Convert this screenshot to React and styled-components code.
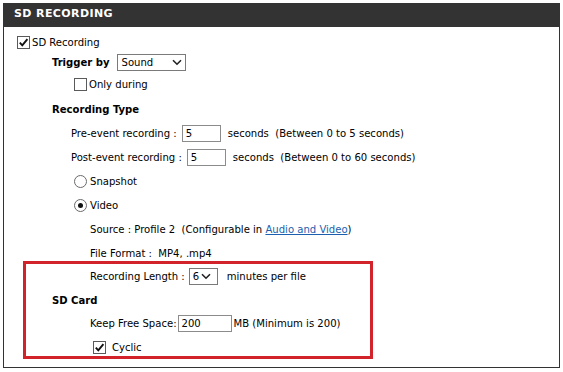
import React from "react";
import styled, { createGlobalStyle } from "styled-components";

const GlobalStyle = createGlobalStyle`
  html, body { margin: 0; padding: 0; background: #fff; }
  body {
    font-family: "DejaVu Sans Condensed", "DejaVu Sans", sans-serif;
    font-size: 11.2px;
    color: #000;
  }
`;

const Panel = styled.section`
  margin: 3px 0 0 3px;
  width: 557px;
`;

const Header = styled.h2`
  margin: 0;
  height: 24px;
  box-sizing: border-box;
  padding: 4px 0 0 11px;
  line-height: 20px;
  background: #333;
  color: #fff;
  font: bold 11px "DejaVu Sans", sans-serif;
  letter-spacing: 0.4px;
`;

const Body = styled.div`
  border: 1px solid #333;
  border-top: none;
  padding: 5px 0 8px;
`;

const Row = styled.div`
  display: flex;
  align-items: center;
  height: ${(p) => p.$h || 24}px;
  padding-left: ${(p) => p.$indent || 0}px;
  white-space: pre;
`;

const Bold = styled.span`
  font-weight: bold;
`;

const Text = styled.span`
  margin-left: ${(p) => p.$ml || 0}px;
`;

const Box = styled.span`
  display: inline-flex;
  align-items: center;
  justify-content: center;
  width: 13px;
  height: 13px;
  box-sizing: border-box;
  border: 1px solid #5a5a5a;
  background: #fff;
  flex: none;
`;

const Round = styled(Box)`
  border-radius: 50%;
  border-color: #6a6a6a;
`;

const Dot = styled.span`
  width: 5px;
  height: 5px;
  border-radius: 50%;
  background: #111;
`;

const Field = styled.span`
  display: inline-flex;
  align-items: center;
  box-sizing: border-box;
  height: 17px;
  width: ${(p) => p.$w}px;
  margin-left: ${(p) => p.$ml || 0}px;
  margin-right: ${(p) => p.$mr || 0}px;
  padding-left: 3px;
  border: 1px solid #8c8c8c;
  background: #fff;
`;

const Select = styled(Field)`
  padding-left: ${(p) => p.$pl || 4}px;
  padding-right: ${(p) => p.$pr || 3}px;
  border-color: #7a7a7a;
`;

const Chevron = styled.svg`
  margin-left: auto;
  width: 10px;
  height: 7px;
  flex: none;
`;

const Link = styled.a`
  color: #1b5fae;
  text-decoration: underline;
`;

const Highlight = styled.div`
  position: relative;
  &::after {
    content: "";
    position: absolute;
    left: 19px;
    top: -4px;
    width: 350px;
    height: 98px;
    box-sizing: border-box;
    border: 3px solid #d2232a;
    pointer-events: none;
  }
`;

const CheckBox = ({ checked }) => (
  <Box>
    {checked && (
      <svg width="11" height="11" viewBox="0 0 11 11">
        <path d="M1.8 5.6 L4.3 8.3 L9.4 2.2" fill="none" stroke="#111" strokeWidth="1.9" />
      </svg>
    )}
  </Box>
);

const Radio = ({ checked }) => <Round>{checked && <Dot />}</Round>;

const ChevronIcon = () => (
  <Chevron viewBox="0 0 10 7">
    <path d="M1 1.2 L5 5.2 L9 1.2" fill="none" stroke="#222" strokeWidth="1.6" />
  </Chevron>
);

export default function App() {
  return (
    <>
      <GlobalStyle />
      <Panel>
        <Header>SD RECORDING</Header>
        <Body>
          <Row $h={21} $indent={13}>
            <CheckBox checked />
            <Text $ml={2}>SD Recording</Text>
          </Row>
          <Row $h={18} $indent={48}>
            <Bold>Trigger by</Bold>
            <Select $w={69} $ml={7}>
              Sound
              <ChevronIcon />
            </Select>
          </Row>
          <Row $h={26} $indent={70}>
            <CheckBox />
            <Text $ml={2}>Only during</Text>
          </Row>
          <Row $indent={48}>
            <Bold>Recording Type</Bold>
          </Row>
          <Row $indent={67}>
            <Text>Pre-event recording :</Text>
            <Field $w={39} $ml={5} $mr={7}>5</Field>
            <Text>seconds  (Between 0 to 5 seconds)</Text>
          </Row>
          <Row $indent={67}>
            <Text>Post-event recording :</Text>
            <Field $w={39} $ml={5} $mr={7}>5</Field>
            <Text>seconds  (Between 0 to 60 seconds)</Text>
          </Row>
          <Row $indent={70}>
            <Radio />
            <Text $ml={3}>Snapshot</Text>
          </Row>
          <Row $indent={70}>
            <Radio checked />
            <Text $ml={3}>Video</Text>
          </Row>
          <Row $indent={86}>
            <Text>
              Source : Profile 2  (Configurable in <Link>Audio and Video</Link>)
            </Text>
          </Row>
          <Row $indent={86}>
            <Text>File Format :  MP4, .mp4</Text>
          </Row>
          <Highlight>
            <Row $h={23} $indent={86}>
              <Text>Recording Length :</Text>
              <Select $w={29} $ml={4} $mr={9} $pl={3} $pr={6}>
                6
                <ChevronIcon />
              </Select>
              <Text>minutes per file</Text>
            </Row>
            <Row $indent={48}>
              <Bold>SD Card</Bold>
            </Row>
            <Row $h={23} $indent={86}>
              <Text>Keep Free Space:</Text>
              <Field $w={54} $ml={1} $mr={2}>200</Field>
              <Text>MB (Minimum is 200)</Text>
            </Row>
            <Row $indent={89}>
              <CheckBox checked />
              <Text $ml={6}>Cyclic</Text>
            </Row>
          </Highlight>
        </Body>
      </Panel>
    </>
  );
}
